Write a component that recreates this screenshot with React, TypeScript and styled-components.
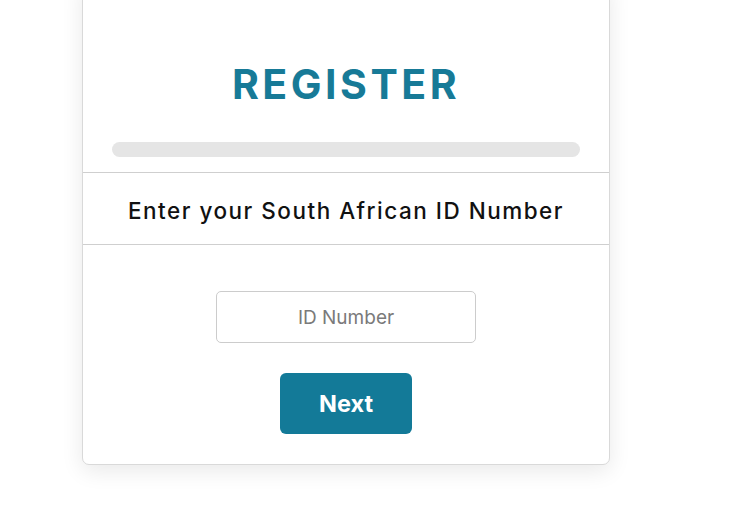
import React from "react";
import styled, { createGlobalStyle } from "styled-components";

const GlobalStyle = createGlobalStyle`
  html, body {
    margin: 0;
    padding: 0;
    background: #ffffff;
  }
  body {
    font-family: "Inter", "Liberation Sans", sans-serif;
    overflow: hidden;
  }
`;

const Page = styled.div`
  width: 747px;
  height: 513px;
  display: flex;
  align-items: flex-start;
  padding-left: 82px;
  box-sizing: border-box;
`;

const Card = styled.div`
  width: 528px;
  margin-top: -20px;
  box-sizing: border-box;
  background: #ffffff;
  border: 1px solid #d9d9d9;
  border-radius: 7px;
  box-shadow: 0 6px 22px rgba(0, 0, 0, 0.09);
  display: flex;
  flex-direction: column;
`;

const Header = styled.div`
  display: flex;
  flex-direction: column;
  align-items: center;
  padding: 79px 29px 15px;
`;

const Title = styled.h1`
  margin: 0;
  font-family: "Inter", "Liberation Sans", sans-serif;
  font-weight: 700;
  font-size: 41px;
  line-height: 48px;
  letter-spacing: 3.5px;
  color: #177a97;
`;

const Progress = styled.div`
  align-self: stretch;
  height: 15px;
  margin-top: 34px;
  border-radius: 8px;
  background: #e5e5e5;
`;

const StepRow = styled.div`
  border-top: 1px solid #cfcfcf;
  border-bottom: 1px solid #cfcfcf;
  height: 73px;
  padding-top: 4px;
  box-sizing: border-box;
  display: flex;
  align-items: center;
  justify-content: center;
`;

const StepLabel = styled.h2`
  margin: 0;
  font-family: "Inter", "Liberation Sans", sans-serif;
  font-weight: 500;
  font-size: 22.5px;
  letter-spacing: 1.5px;
  color: #111111;
`;

const Form = styled.form`
  display: flex;
  flex-direction: column;
  align-items: center;
  padding: 46px 0 30px;
  gap: 30px;
`;

const Input = styled.input`
  width: 260px;
  height: 52px;
  box-sizing: border-box;
  border: 1px solid #cccccc;
  border-radius: 5px;
  text-align: center;
  font-family: "Inter", "Liberation Sans", sans-serif;
  font-size: 19px;
  color: #333333;
  outline: none;
  &::placeholder {
    color: #7a7a7a;
  }
`;

const Button = styled.button`
  width: 132px;
  height: 61px;
  border: none;
  border-radius: 6px;
  background: #137a98;
  color: #ffffff;
  font-family: "Inter", "Liberation Sans", sans-serif;
  font-weight: 700;
  font-size: 23.5px;
  cursor: pointer;
`;

export default function App() {
  return (
    <>
      <GlobalStyle />
      <Page>
        <Card>
          <Header>
            <Title>REGISTER</Title>
            <Progress />
          </Header>
          <StepRow>
            <StepLabel>Enter your South African ID Number</StepLabel>
          </StepRow>
          <Form onSubmit={(e) => e.preventDefault()}>
            <Input placeholder="ID Number" />
            <Button type="submit">Next</Button>
          </Form>
        </Card>
      </Page>
    </>
  );
}
